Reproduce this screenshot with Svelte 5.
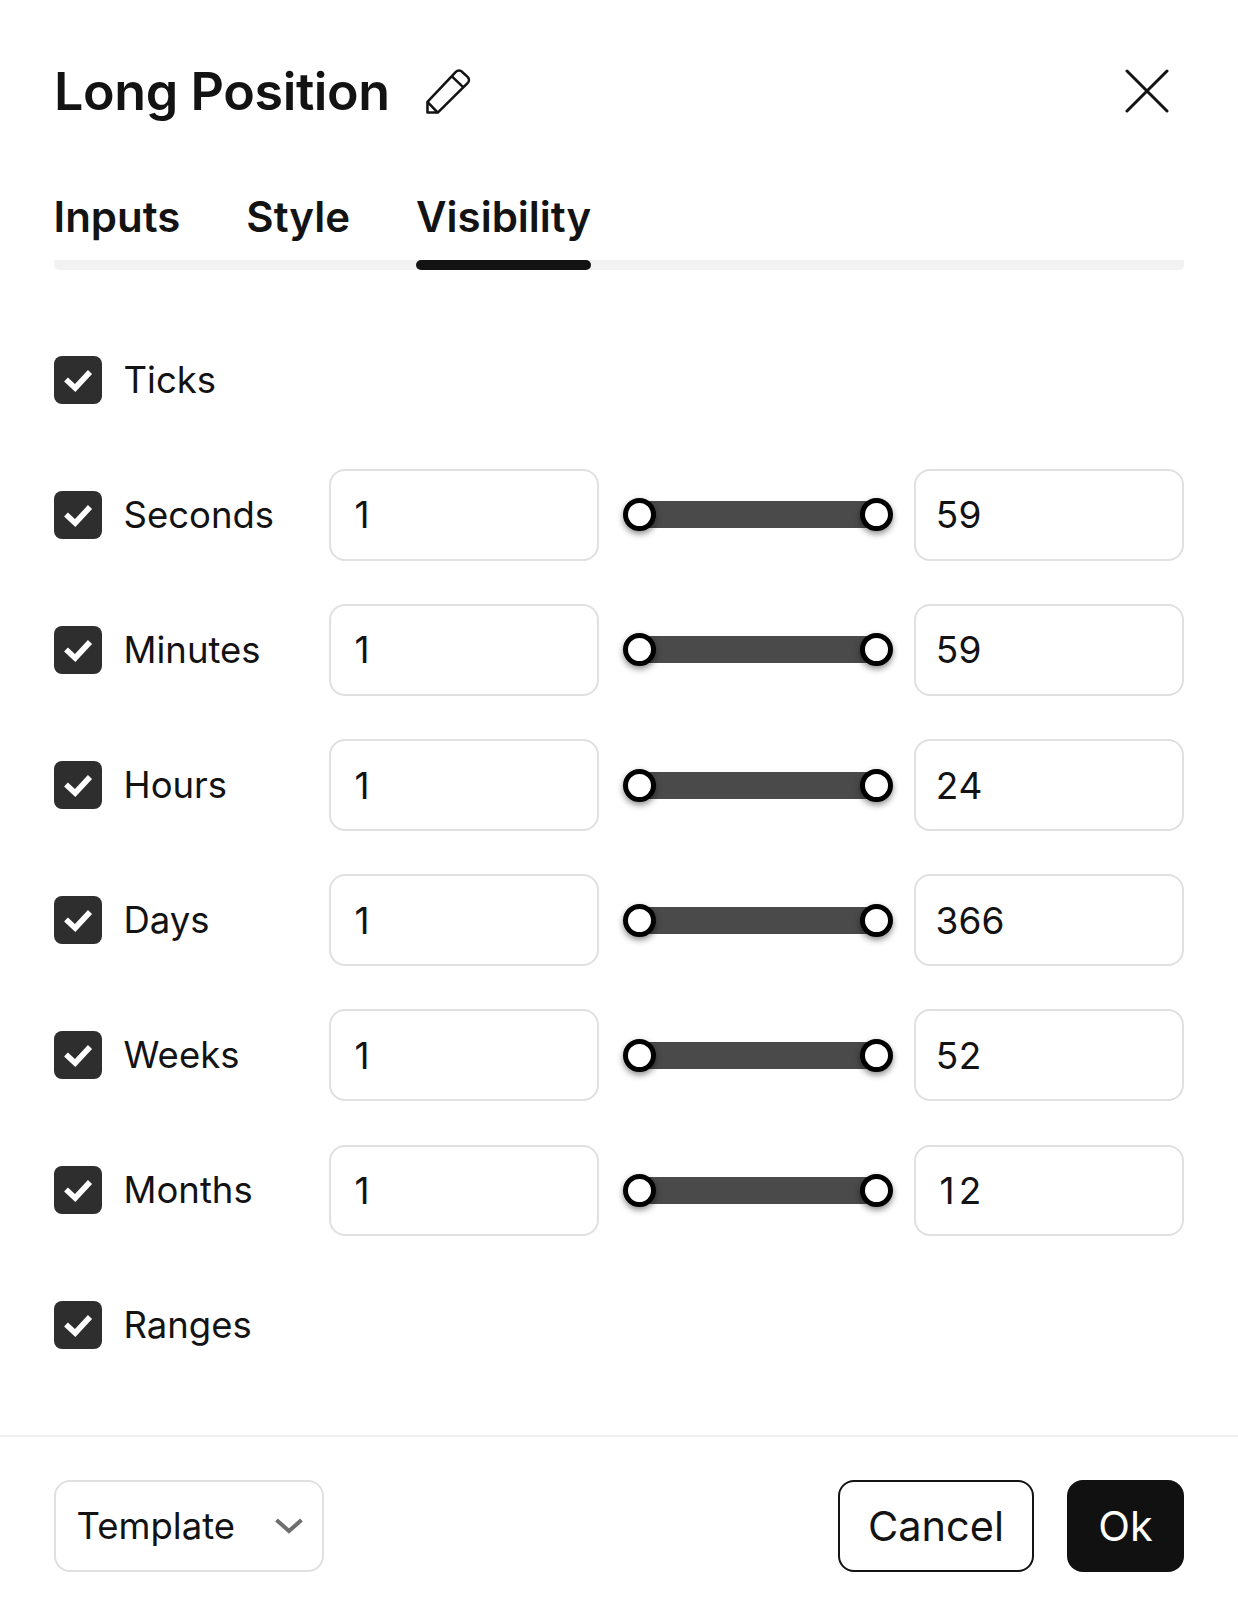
<script>
  const rows = [
    { label: "Ticks" },
    { label: "Seconds", min: 1, max: 59 },
    { label: "Minutes", min: 1, max: 59 },
    { label: "Hours", min: 1, max: 24 },
    { label: "Days", min: 1, max: 366 },
    { label: "Weeks", min: 1, max: 52 },
    { label: "Months", min: 1, max: 12 },
    { label: "Ranges" },
  ];
  const tabs = ["Inputs", "Style", "Visibility"];
</script>

{#snippet digits(value)}
  <!-- fixed-width cells: the un-footed "1" keeps the same advance as other digits -->
  <div class="field">
    {#each String(value) as d}
      <span class="digit">{d}</span>
    {/each}
  </div>
{/snippet}

<div class="dialog">
  <header class="head">
    <div class="title">
      <h1>Long Position</h1>
      <svg class="pencil" viewBox="0 0 46 46" fill="none" stroke="#131313" stroke-width="2.6" stroke-linejoin="round">
        <path d="M1.5 33.5 30.5 3a4.6 4.6 0 0 1 6.5 0l5.5 5a4.6 4.6 0 0 1 0 6.5L12 44.5H1.5z" />
        <path d="M26.5 7.5 38.5 19M1.5 33.5 12 44.5" />
      </svg>
    </div>
    <svg class="close" viewBox="0 0 44 44" fill="none" stroke="#131313" stroke-width="3" stroke-linecap="round">
      <path d="M2 2 42 42M42 2 2 42" />
    </svg>
  </header>

  <nav class="tabs">
    {#each tabs as tab, i}
      <span class="tab" class:active={i === 2}>{tab}</span>
    {/each}
  </nav>

  <div class="rows">
    {#each rows as row}
      <div class="row">
        <label class="check">
          <span class="box">
            <svg viewBox="0 0 48 48" fill="none" stroke="#fff" stroke-width="5.6">
              <path d="M12 23.5 21.2 32 36 16" />
            </svg>
          </span>
          <span>{row.label}</span>
        </label>
        {#if row.max}
          {@render digits(row.min)}
          <div class="range">
            <span class="thumb"></span>
            <span class="bar"></span>
            <span class="thumb"></span>
          </div>
          {@render digits(row.max)}
        {/if}
      </div>
    {/each}
  </div>

  <footer class="foot">
    <div class="template">
      <span>Template</span>
      <svg viewBox="0 0 28 16" fill="none" stroke="#6f6f6f" stroke-width="4">
        <path d="M1.5 2 14 13 26.5 2" />
      </svg>
    </div>
    <div class="actions">
      <button class="btn cancel">Cancel</button>
      <button class="btn ok">Ok</button>
    </div>
  </footer>
</div>

<style>
  :global(body) {
    background: #fff;
  }

  .dialog {
    width: 1238px;
    height: 1615px;
    display: flex;
    flex-direction: column;
    font-family: Inter, "Noto Sans", sans-serif;
    color: #131313;
  }

  .head {
    display: flex;
    align-items: center;
    justify-content: space-between;
    padding: 61px 69px 0 54px;
    height: 60px;
  }

  .title {
    display: flex;
    align-items: center;
    gap: 36px;
  }

  h1 {
    margin: 0;
    padding-top: 2px;
    font-size: 52px;
    font-weight: 600;
    line-height: 60px;
    letter-spacing: -0.4px;
  }

  .pencil {
    width: 45px;
    height: 45px;
  }

  .close {
    width: 44px;
    height: 44px;
  }

  .tabs {
    display: flex;
    gap: 66px;
    margin: 73px 54px 0 53.5px;
    height: 66px;
    border-bottom: 10px solid #f2f2f2;
    border-radius: 5px;
  }

  .tab {
    position: relative;
    font-size: 42px;
    font-weight: 600;
    line-height: 45px;
    height: 66px;
  }

  .tab.active::after {
    content: "";
    position: absolute;
    left: 0;
    right: 0;
    bottom: -10px;
    height: 10px;
    border-radius: 5px;
    background: #131313;
  }

  .rows {
    display: flex;
    flex-direction: column;
    gap: 43.5px;
    margin: 0 54px 0 53.5px;
    padding-top: 64px;
  }

  .row {
    display: grid;
    grid-template-columns: 251.5px 270px 267px 270px;
    column-gap: 24px;
    align-items: center;
    height: 91.6px;
    font-size: 37px;
  }

  .check {
    display: flex;
    align-items: center;
    gap: 22px;
    font-size: 36.5px;
  }

  .box {
    width: 48px;
    height: 48px;
    border-radius: 8px;
    background: #2e2e2e;
    display: flex;
  }

  .box svg {
    width: 48px;
    height: 48px;
  }

  .field {
    box-sizing: border-box;
    height: 91.6px;
    padding: 0 19.5px;
    display: flex;
    align-items: center;
    border: 2px solid #e0e0e0;
    border-radius: 16px;
  }

  .digit {
    width: 23px;
    text-align: center;
  }

  .range {
    display: flex;
    align-items: center;
    margin-right: -3px;
  }

  .bar {
    flex: 1;
    height: 27px;
    margin: 0 -14px;
    background: #4a4a4a;
  }

  .thumb {
    position: relative;
    box-sizing: border-box;
    width: 33px;
    height: 33px;
    border-radius: 50%;
    background: #fff;
    border: 5.5px solid #000;
    box-shadow: 0 3px 6px rgba(0, 0, 0, 0.45);
  }

  .foot {
    margin-top: auto;
    height: 180px;
    box-sizing: border-box;
    padding: 43px 54px 0 53.5px;
    border-top: 2px solid #f0f0f0;
    display: flex;
    justify-content: space-between;
    align-items: flex-start;
  }

  .template {
    box-sizing: border-box;
    width: 270px;
    height: 91.6px;
    padding: 0 19px 0 21px;
    display: flex;
    align-items: center;
    justify-content: space-between;
    border: 2px solid #e0e0e0;
    border-radius: 16px;
    font-size: 36.5px;
  }

  .template svg {
    width: 28px;
    height: 16px;
  }

  .actions {
    display: flex;
    gap: 33px;
  }

  .btn {
    box-sizing: border-box;
    height: 91.6px;
    border-radius: 16px;
    font-family: inherit;
    font-size: 41.5px;
    padding: 0;
  }

  .cancel {
    width: 196px;
    background: #fff;
    color: #131313;
    border: 2px solid #131313;
  }

  .ok {
    width: 117px;
    background: #111;
    color: #fff;
    border: none;
  }
</style>
